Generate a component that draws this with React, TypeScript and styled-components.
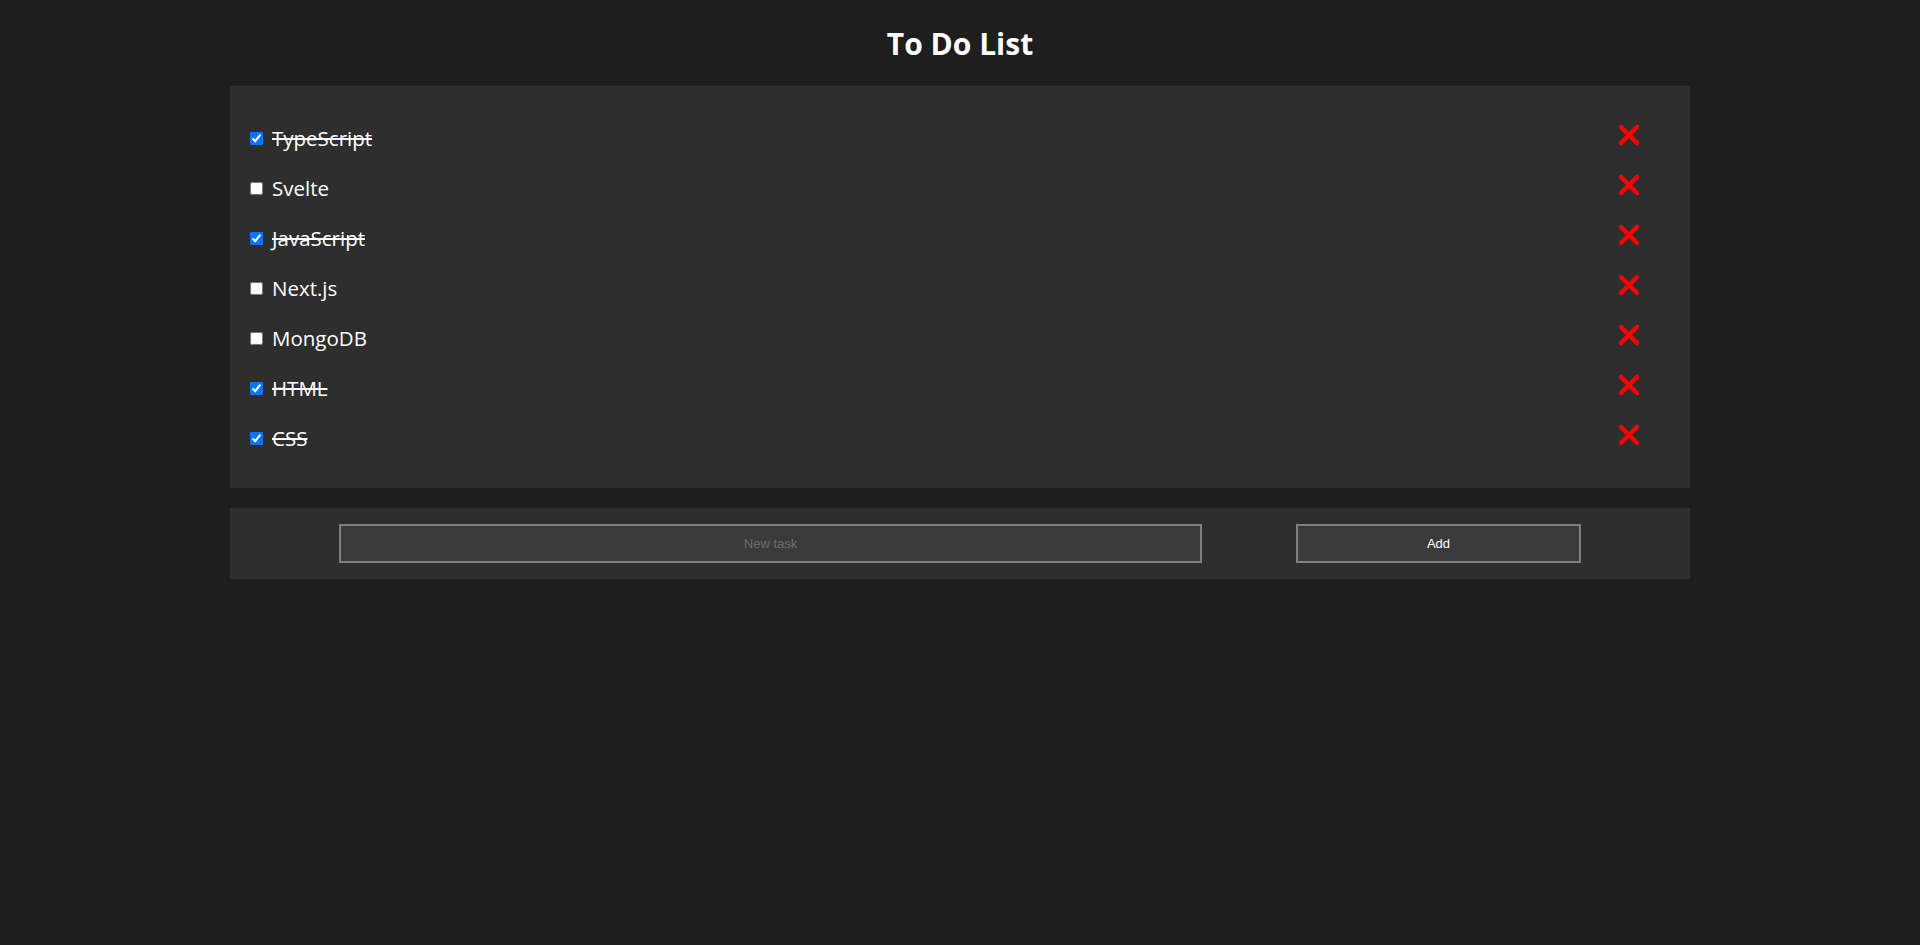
import React, { useState } from "react";
import styled, { createGlobalStyle } from "styled-components";

const GlobalStyle = createGlobalStyle`
  html, body {
    margin: 0;
    padding: 0;
    background: #1e1e1e;
    font-family: "Open Sans", "Noto Sans", sans-serif;
    color: #ffffff;
  }
`;

const Page = styled.div`
  display: flex;
  flex-direction: column;
  align-items: center;
  min-height: 945px;
`;

const Title = styled.h1`
  margin: 0;
  height: 86px;
  display: flex;
  align-items: center;
  justify-content: center;
  font-size: 30px;
  font-weight: 700;
  color: #ffffff;
`;

const Panel = styled.div`
  width: 1460px;
  background: #2e2e2e;
  box-sizing: border-box;
`;

const ListPanel = styled(Panel)`
  padding: 27px 49px 25px 16px;
`;

const List = styled.ul`
  list-style: none;
  margin: 0;
  padding: 0;
  display: flex;
  flex-direction: column;
`;

const Row = styled.li`
  height: 50px;
  display: flex;
  align-items: center;
  justify-content: space-between;
`;

const Label = styled.label`
  display: flex;
  align-items: center;
  gap: 6px;
  font-size: 20.5px;
`;

const Check = styled.input`
  width: 13px;
  height: 13px;
  margin: 3px 3px 3px 4px;
`;

const TaskText = styled.span<{ $done: boolean }>`
  text-decoration: ${(p) => (p.$done ? "line-through" : "none")};
  color: #ffffff;
`;

const DeleteButton = styled.button`
  border: none;
  background: transparent;
  padding: 0;
  width: 24px;
  height: 24px;
  display: flex;
  align-items: center;
  justify-content: center;
  cursor: pointer;
  margin-top: -6px;
`;

const FormPanel = styled(Panel)`
  margin-top: 20px;
  padding: 16px 109px;
  display: flex;
  justify-content: space-between;
  align-items: center;
`;

const TaskInput = styled.input`
  width: 863px;
  height: 39px;
  box-sizing: border-box;
  border: 2px solid #808080;
  background: #3b3b3b;
  color: #ffffff;
  text-align: center;
  font-family: "Liberation Sans", Arial, sans-serif;
  font-size: 13px;
  outline: none;
  &::placeholder {
    color: #6c6c6c;
  }
`;

const AddButton = styled.button`
  width: 285px;
  height: 39px;
  box-sizing: border-box;
  border: 2px solid #808080;
  background: #3b3b3b;
  color: #ffffff;
  font-family: "Liberation Sans", Arial, sans-serif;
  font-size: 13px;
  cursor: pointer;
`;

const XIcon = () => (
  <svg width="24" height="24" viewBox="0 0 24 24">
    <path
      d="M4 4 L20 20 M20 4 L4 20"
      stroke="#ff0000"
      strokeWidth="4.4"
      strokeLinecap="round"
      fill="none"
    />
  </svg>
);

type Task = { id: number; text: string; done: boolean };

const initial: Task[] = [
  { id: 1, text: "TypeScript", done: true },
  { id: 2, text: "Svelte", done: false },
  { id: 3, text: "JavaScript", done: true },
  { id: 4, text: "Next.js", done: false },
  { id: 5, text: "MongoDB", done: false },
  { id: 6, text: "HTML", done: true },
  { id: 7, text: "CSS", done: true },
];

export default function App() {
  const [tasks, setTasks] = useState<Task[]>(initial);
  const [value, setValue] = useState("");

  const toggle = (id: number) =>
    setTasks((t) => t.map((x) => (x.id === id ? { ...x, done: !x.done } : x)));
  const remove = (id: number) => setTasks((t) => t.filter((x) => x.id !== id));
  const add = () => {
    if (!value.trim()) return;
    setTasks((t) => [...t, { id: Date.now(), text: value.trim(), done: false }]);
    setValue("");
  };

  return (
    <>
      <GlobalStyle />
      <Page>
        <Title>To Do List</Title>
        <ListPanel>
          <List>
            {tasks.map((t) => (
              <Row key={t.id}>
                <Label>
                  <Check type="checkbox" checked={t.done} onChange={() => toggle(t.id)} />
                  <TaskText $done={t.done}>{t.text}</TaskText>
                </Label>
                <DeleteButton onClick={() => remove(t.id)} aria-label="Delete">
                  <XIcon />
                </DeleteButton>
              </Row>
            ))}
          </List>
        </ListPanel>
        <FormPanel>
          <TaskInput
            placeholder="New task"
            value={value}
            onChange={(e) => setValue(e.target.value)}
          />
          <AddButton onClick={add}>Add</AddButton>
        </FormPanel>
      </Page>
    </>
  );
}
